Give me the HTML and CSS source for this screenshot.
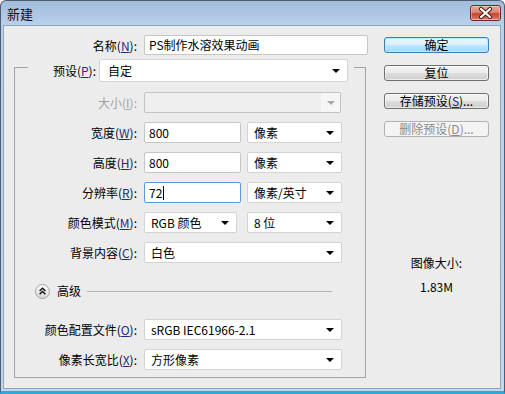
FILE: index.html
```html
<!DOCTYPE html>
<html lang="zh-CN">
<head>
<meta charset="utf-8">
<title>新建</title>
<link rel="stylesheet" href="styles.css">
</head>
<body>
<div class="window">
  <div class="titlebar">
    <span class="title">新建</span>
    <button class="close" type="button" aria-label="关闭">
      <svg width="29" height="14" viewBox="0 0 29 14">
        <path d="M10 3 L19 11 M19 3 L10 11" stroke="#4a1c18" stroke-width="4.2" stroke-linecap="round" fill="none"/>
        <path d="M10 3 L19 11 M19 3 L10 11" stroke="#ffffff" stroke-width="2.2" stroke-linecap="round" fill="none"/>
      </svg>
    </button>
  </div>
  <div class="content">
    <div class="form">
      <div class="row name-row">
        <label class="lbl">名称(<u>N</u>):</label>
        <div class="field input name-input">PS制作水溶效果动画</div>
      </div>
      <div class="group">
        <div class="group-head">
          <label class="lbl">预设(<u>P</u>):</label>
          <div class="field select preset"><span>自定</span><i class="arrow"></i></div>
        </div>
        <div class="rows rows-top">
          <div class="row">
            <label class="lbl disabled">大小(<u>I</u>):</label>
            <div class="field select disabled-field w197"><span></span><span class="dis-btn"><i class="arrow arrow-dis"></i></span></div>
          </div>
          <div class="row">
            <label class="lbl">宽度(<u>W</u>):</label>
            <div class="field input w97">800</div>
            <div class="field select w95 unit"><span>像素</span><i class="arrow"></i></div>
          </div>
          <div class="row">
            <label class="lbl">高度(<u>H</u>):</label>
            <div class="field input w97">800</div>
            <div class="field select w95 unit"><span>像素</span><i class="arrow"></i></div>
          </div>
          <div class="row">
            <label class="lbl">分辨率(<u>R</u>):</label>
            <div class="field input w97 focused">72<span class="caret"></span></div>
            <div class="field select w95 unit"><span>像素/英寸</span><i class="arrow"></i></div>
          </div>
          <div class="row">
            <label class="lbl">颜色模式(<u>M</u>):</label>
            <div class="field select w93"><span>RGB 颜色</span><i class="arrow"></i></div>
            <div class="field select w95 unit2"><span>8 位</span><i class="arrow"></i></div>
          </div>
          <div class="row">
            <label class="lbl">背景内容(<u>C</u>):</label>
            <div class="field select w198"><span>白色</span><i class="arrow"></i></div>
          </div>
        </div>
        <div class="adv-row">
          <span class="adv-btn">
            <svg width="15" height="15" viewBox="0 0 15 15">
              <defs>
                <linearGradient id="g" x1="0" y1="0" x2="0" y2="1">
                  <stop offset="0" stop-color="#ffffff"/>
                  <stop offset="1" stop-color="#d6d6d6"/>
                </linearGradient>
              </defs>
              <circle cx="7.5" cy="7.5" r="7" fill="url(#g)" stroke="#a2a2a2"/>
              <polyline points="4.6,7 7.5,4.3 10.4,7" fill="none" stroke="#111" stroke-width="1.4"/>
              <polyline points="4.6,10.2 7.5,7.5 10.4,10.2" fill="none" stroke="#111" stroke-width="1.4"/>
            </svg>
          </span>
          <span class="adv-text">高级</span>
          <span class="adv-line"></span>
        </div>
        <div class="rows rows-bottom">
          <div class="row">
            <label class="lbl">颜色配置文件(<u>O</u>):</label>
            <div class="field select w198"><span>sRGB IEC61966-2.1</span><i class="arrow"></i></div>
          </div>
          <div class="row">
            <label class="lbl">像素长宽比(<u>X</u>):</label>
            <div class="field select w198"><span>方形像素</span><i class="arrow"></i></div>
          </div>
        </div>
      </div>
    </div>
    <div class="side">
      <button class="btn default" type="button">确定</button>
      <button class="btn" type="button">复位</button>
      <button class="btn" type="button">存储预设(<u>S</u>)...</button>
      <button class="btn btn-disabled" type="button" disabled>删除预设(<u>D</u>)...</button>
      <div class="info-title">图像大小:</div>
      <div class="info-value">1.83M</div>
    </div>
  </div>
</div>
</body>
</html>
```
FILE: styles.css
```css
* { box-sizing: border-box; }
html, body {
  margin: 0;
  padding: 0;
}
body {
  width: 505px;
  height: 394px;
  overflow: hidden;
  background: #ffffff;
  font-family: "Noto Sans CJK SC", "Noto Sans", sans-serif;
  font-size: 12px;
  color: #000;
}
.window {
  width: 505px;
  height: 394px;
  border: 1px solid #4b5d73;
  border-bottom: 3px solid #2fa9d9;
  border-radius: 6px 6px 0 0;
  background: linear-gradient(#a3bcdc 0px, #b9d0ea 24px, #c4d7ec 100%);
  display: flex;
  flex-direction: column;
}
.titlebar {
  height: 24px;
  flex: none;
  display: flex;
  align-items: center;
  justify-content: space-between;
  padding: 0 3px 0 6px;
}
.title {
  font-size: 13px;
  line-height: 16px;
  color: #111;
  padding-top: 1px;
}
.close {
  width: 31px;
  height: 16px;
  padding: 0;
  margin: 0;
  border: 1px solid #6b2c28;
  border-radius: 3px;
  background: linear-gradient(#e6a899 0%, #d98876 45%, #c5472f 55%, #d0694f 85%, #e09b7e 100%);
  display: flex;
  align-items: center;
  justify-content: center;
  box-shadow: inset 0 0 0 1px rgba(255, 255, 255, 0.35);
}
.close svg { display: block; }
.content {
  flex: 1;
  margin: 0 3px 2px 2px;
  border: 1px solid #8fa5be;
  background: #ececec;
  display: flex;
  align-items: flex-start;
}
.form {
  width: 364px;
  padding-top: 9px;
  flex: none;
}
.row {
  display: flex;
  align-items: center;
  height: 21px;
}
.lbl {
  flex: none;
  text-align: right;
  white-space: nowrap;
  line-height: 21px;
}
.lbl u { color: #1f2d80; }
.lbl.disabled, .lbl.disabled u { color: #a3a3a3; }
.name-row { height: 20px; }
.name-row .lbl { width: 133px; margin-right: 7px; }
.field {
  height: 21px;
  border: 1px solid #d3d3d3;
  border-radius: 2px;
  background: #ffffff;
  display: flex;
  align-items: center;
  justify-content: space-between;
  white-space: nowrap;
  line-height: 16px;
  flex: none;
}
.input {
  justify-content: flex-start;
  padding-left: 4px;
  border-color: #c6c6c6;
}
.name-input { width: 224px; height: 20px; }
.select { padding: 0 7px 0 6px; }
.arrow {
  display: block;
  width: 0;
  height: 0;
  border-left: 4px solid transparent;
  border-right: 4px solid transparent;
  border-top: 4px solid #000;
}
.arrow-dis { border-top-color: #a8a8a8; }
.focused { border-color: #5b9bd5; }
.caret {
  display: inline-block;
  width: 1px;
  height: 14px;
  background: #000;
  margin-left: 1px;
}
.group {
  width: 352px;
  margin: 12px 0 0 10px;
  border: 1px solid #a3a3a3;
  padding: 0 0 7px 0;
}
.group-head {
  display: flex;
  align-items: center;
  width: 326px;
  height: 23px;
  margin: -9px 0 0 13px;
  background: #ececec;
}
.group-head .lbl { width: 68px; margin-right: 3px; line-height: 23px; }
.preset { width: 249px; height: 23px; padding-left: 8px; }
.rows {
  display: flex;
  flex-direction: column;
  gap: 9px;
}
.rows-top { margin-top: 10px; }
.rows .lbl { width: 122px; margin-right: 7px; }
.w197 { width: 197px; }
.w198 { width: 198px; }
.w97 { width: 97px; }
.w95 { width: 95px; }
.w93 { width: 93px; }
.unit { margin-left: 6px; }
.unit2 { margin-left: 10px; }
.disabled-field {
  background: #efefef;
  border-color: #c4c4c4;
  padding: 0;
  align-items: stretch;
}
.dis-btn {
  width: 19px;
  background: #f6f6f6;
  display: flex;
  align-items: center;
  justify-content: center;
}
.adv-row {
  display: flex;
  align-items: center;
  height: 16px;
  margin: 20px 33px 20px 20px;
}
.adv-btn { width: 15px; height: 15px; flex: none; }
.adv-btn svg { display: block; }
.adv-text {
  margin-left: 7px;
  line-height: 16px;
  flex: none;
}
.adv-line {
  flex: 1;
  height: 0;
  border-top: 1px solid #b2b2b2;
  margin-left: 6px;
}
.side {
  width: 105px;
  margin-left: 16px;
  padding-top: 11px;
  display: flex;
  flex-direction: column;
  align-items: center;
  flex: none;
}
.btn {
  width: 105px;
  height: 16px;
  margin: 0 0 12px 0;
  padding: 0;
  font-family: inherit;
  font-size: 12px;
  line-height: 14px;
  color: #000;
  border: 1px solid #707070;
  border-radius: 3px;
  background: linear-gradient(#f3f3f3 0%, #ebebeb 50%, #dddddd 50%, #cfcfcf 100%);
  display: flex;
  align-items: center;
  justify-content: center;
  box-shadow: inset 0 0 0 1px rgba(255, 255, 255, 0.6);
}
.btn u { color: #1f2d80; }
.default {
  border-color: #3c7fb1;
  background: linear-gradient(#eaf6fd 0%, #d9f0fc 50%, #bee6fd 50%, #a7d9f5 100%);
  box-shadow: inset 0 0 0 1px #b4e8fb;
}
.btn-disabled {
  margin-bottom: 0;
  color: #8b8b8b;
  border-color: #adb2b5;
  background: #f4f4f4;
  box-shadow: none;
}
.btn-disabled u { color: #8b8b8b; }
.info-title {
  margin-top: 119px;
  line-height: 14px;
}
.info-value {
  margin-top: 10px;
  line-height: 14px;
}
```
